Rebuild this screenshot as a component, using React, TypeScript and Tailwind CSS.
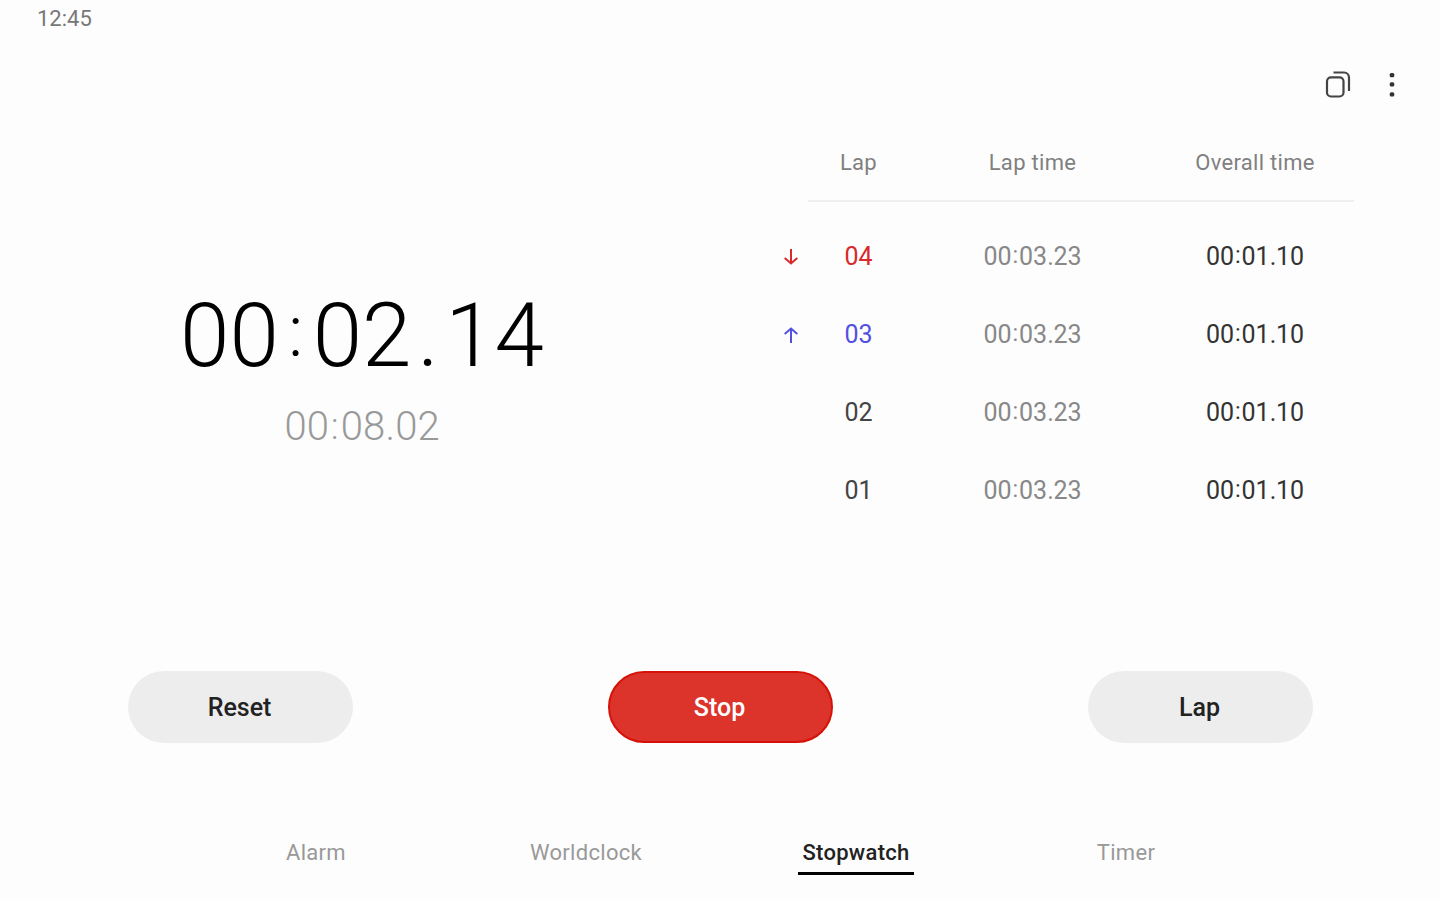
type TimeProps = {
  value: string;
  className?: string;
  wide?: boolean;
};

type Lap = {
  id: string;
  lapTime: string;
  overall: string;
  trend?: "down" | "up";
};

const laps: Lap[] = [
  { id: "04", lapTime: "00:03.23", overall: "00:01.10", trend: "down" },
  { id: "03", lapTime: "00:03.23", overall: "00:01.10", trend: "up" },
  { id: "02", lapTime: "00:03.23", overall: "00:01.10" },
  { id: "01", lapTime: "00:03.23", overall: "00:01.10" },
];

const tabs = ["Alarm", "Worldclock", "Stopwatch", "Timer"];

// the colon is smaller and raised so that it sits in the middle of the digits
const Time = ({ value, className = "", wide }: TimeProps) => {
  const [minutes, rest] = value.split(":");
  const [seconds, hundredths] = rest.split(".");
  const gap = wide ? "w-[0.38em]" : "w-[0.3em]";
  const dot = wide ? "w-[0.38em]" : "w-[0.25em]";
  const colon = wide ? "-top-[0.07em] text-[0.82em]" : "-top-[0.02em] text-[0.94em]";

  return (
    <div className={`flex justify-center whitespace-nowrap ${className}`}>
      <span>{minutes}</span>
      <span className={`${gap} flex justify-center`}>
        <span className={`relative ${colon}`}>:</span>
      </span>
      <span>{seconds}</span>
      <span className={`${dot} text-center`}>.</span>
      <span>{hundredths}</span>
    </div>
  );
};

const TrendArrow = ({ trend }: { trend: "down" | "up" }) => (
  <svg
    width="16"
    height="18"
    viewBox="0 0 16 18"
    fill="none"
    stroke="currentColor"
    strokeWidth="2"
    className={trend === "up" ? "rotate-180" : ""}
  >
    <path d="M8 1v15M1.7 10 8 15.5l6.3-5.5" />
  </svg>
);

const App = () => {
  return (
    <div className="flex h-screen w-full flex-col overflow-hidden bg-[#fdfdfd] font-['Roboto',sans-serif] text-[#222]">
      <div className="h-9 pt-px pl-[37px] text-[22px] leading-9 text-[#777]">
        12:45
      </div>

      <div className="flex h-[98px] items-center justify-end gap-[36px] pr-[44px]">
        <button aria-label="Copy">
          <svg
            width="28"
            height="28"
            viewBox="0 0 28 28"
            fill="none"
            stroke="#444"
            strokeWidth="2.2"
            className="block"
          >
            <rect x="3" y="6.3" width="16.5" height="19.2" rx="4" />
            <path d="M9.5 1.5H20a5 5 0 0 1 5 5V20" />
          </svg>
        </button>
        <button aria-label="More options">
          <svg width="8" height="28" viewBox="0 0 8 28" fill="#333" className="block">
            <rect x="1.7" y="2" width="4.6" height="4.2" rx="1.5" />
            <rect x="1.7" y="11.3" width="4.6" height="4.2" rx="1.5" />
            <rect x="1.7" y="21.3" width="4.6" height="4.2" rx="1.5" />
          </svg>
        </button>
      </div>

      <div className="flex h-[537px]">
        <div className="w-[724px] pt-[149px]">
          <Time
            value="00:02.14"
            wide
            className="text-[89px] leading-[106px] font-light text-black"
          />
          <Time
            value="00:08.02"
            className="mt-[14px] text-[40px] leading-[48px] font-light text-[#999]"
          />
        </div>

        <div className="w-[630px] pl-[50px]">
          <div className="ml-[34px] grid h-[68px] grid-cols-[101px_247px_198px] border-b-2 border-[#efefef] pt-[12px] text-center text-[22px] leading-[34px] tracking-[0.3px] text-[#808080]">
            <span>Lap</span>
            <span>Lap time</span>
            <span>Overall time</span>
          </div>
          <div className="pt-[16px]">
            {laps.map((lap) => {
              const color =
                lap.trend === "down"
                  ? "text-[#d9292b]"
                  : lap.trend === "up"
                  ? "text-[#5250df]"
                  : "text-[#444]";
              return (
                <div
                  key={lap.id}
                  className="grid h-[78px] grid-cols-[34px_101px_247px_198px] items-center text-center text-[25px]"
                >
                  <span className={`flex justify-center ${color}`}>
                    {lap.trend && <TrendArrow trend={lap.trend} />}
                  </span>
                  <span className={color}>{lap.id}</span>
                  <Time value={lap.lapTime} className="text-[#888]" />
                  <Time value={lap.overall} className="text-[#333]" />
                </div>
              );
            })}
          </div>
        </div>
      </div>

      <div className="flex justify-between pr-[127px] pl-[128px] text-[25px] font-medium text-[#222]">
        <button className="h-[72px] w-[225px] rounded-full bg-[#ededed] pt-[2px] pr-[2px]">
          Reset
        </button>
        <button className="h-[72px] w-[225px] rounded-full border-2 border-[#d51108] bg-[#dc332b] pt-[2px] pr-[2px] text-white">
          Stop
        </button>
        <button className="h-[72px] w-[225px] rounded-full bg-[#ededed] pt-[2px] pr-[2px]">
          Lap
        </button>
      </div>

      <nav className="mt-[93px] grid grid-cols-4 pr-[179px] pl-[181px] text-[22px] leading-[34px] tracking-[0.3px] text-[#999]">
        {tabs.map((tab) => (
          <div key={tab} className="flex justify-center">
            {tab === "Stopwatch" ? (
              <span className="border-b-3 border-black px-[4px] pb-[2px] font-medium text-[#222]">
                {tab}
              </span>
            ) : (
              <span>{tab}</span>
            )}
          </div>
        ))}
      </nav>
    </div>
  );
};

export default App;
